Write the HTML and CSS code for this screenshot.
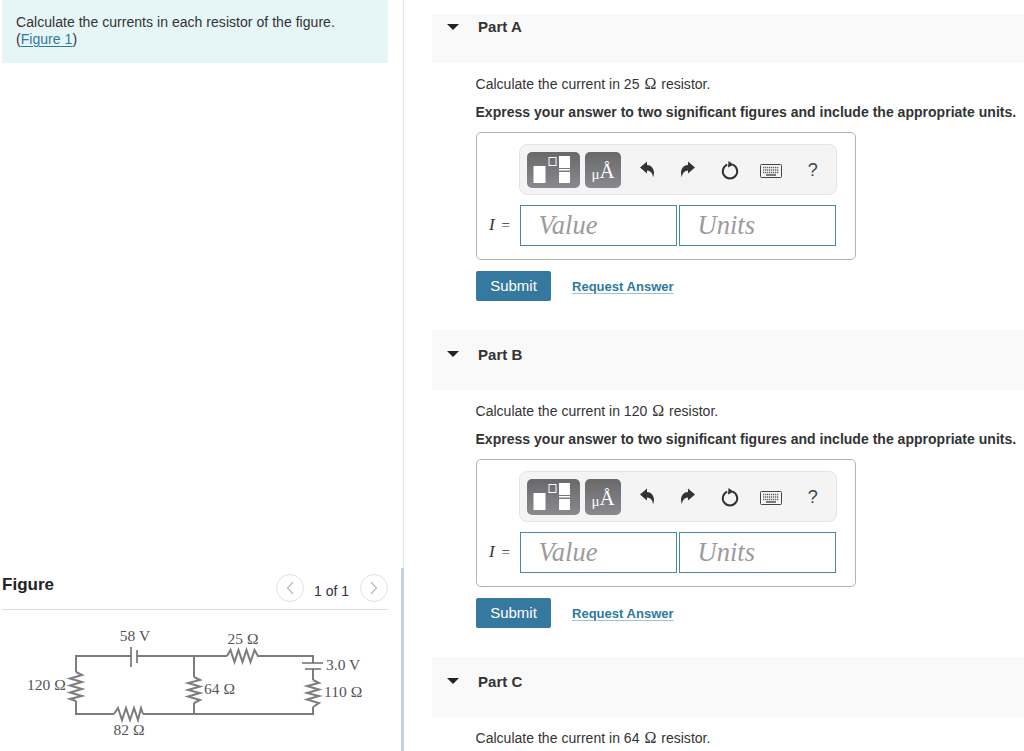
FILE: index.html
```html
<!DOCTYPE html>
<html lang="en">
<head>
<meta charset="utf-8">
<title>Calculate the currents</title>
<link rel="stylesheet" href="styles.css">
</head>
<body>
<svg class="defs" width="0" height="0" aria-hidden="true">
  <symbol id="i-undo" viewBox="0 0 16 17"><path d="M1 6.500 8 .5V4C12 4 15 7.500 15 12 15 13.500 14.500 15 14 16.500 14 12.500 11.500 9.500 8 9.500V12.500z" fill="#333"/></symbol>
  <symbol id="i-redo" viewBox="0 0 16 17"><path d="M15 6.500 8 .5V4C4 4 1 7.500 1 12 1 13.500 1.500 15 2 16.500 2 12.500 4.500 9.500 8 9.500V12.500z" fill="#333"/></symbol>
  <symbol id="i-reset" viewBox="0 0 20 20"><path d="M12.800 4.700a7.200 7.200 0 1 1-5.600 0" fill="none" stroke="#333" stroke-width="2"/><path d="M8.500 1 13.800 4.800 8 7.500z" fill="#333"/></symbol>
  <symbol id="i-keys" viewBox="0 0 22 14"><rect x=".5" y=".5" width="21" height="13" rx="1" fill="#f7f7f7" stroke="#444"/><path d="M3 3.500h16M3 6h16M3 8.500h16" stroke="#666" stroke-width="1.300" stroke-dasharray="1.300 .7"/><path d="M6 11h10" stroke="#444" stroke-width="1.400"/></symbol>
  <symbol id="i-tpl" viewBox="0 0 53 36"><rect x="6.500" y="14" width="12" height="17" fill="#fff"/><rect x="22" y="5.500" width="7" height="8" fill="none" stroke="#fff"/><rect x="32" y="4" width="11" height="12" fill="#fff"/><rect x="32" y="17" width="11" height="1.500" fill="#fff"/><rect x="32" y="20" width="11" height="11" fill="#fff"/></symbol>
</svg>

<div class="page">
  <aside class="left">
    <div class="intro">
      <p>Calculate the currents in each resistor of the figure.</p>
      <p>(<a class="link" href="#">Figure 1</a>)</p>
    </div>
    <div class="figure-head">
      <h2>Figure</h2>
      <div class="pager">
        <button class="circle" type="button"><svg width="8" height="14" viewBox="0 0 8 14"><path d="M7 1 1.500 7 7 13" fill="none" stroke="#bbb" stroke-width="1.300"/></svg></button>
        <span>1 of 1</span>
        <button class="circle" type="button"><svg width="8" height="14" viewBox="0 0 8 14"><path d="M1 1 6.500 7 1 13" fill="none" stroke="#bbb" stroke-width="1.300"/></svg></button>
      </div>
    </div>
    <div class="figure-body">
      <svg class="circuit" width="388" height="141" viewBox="0 610 388 141">
        <g fill="none" stroke="#7d7d7d" stroke-width="2">
          <path d="M131 656H76V672M76 701V714H114M143 714H313V707M313 680V669M313 663V656H262M227 656H137M194 656V677M194 703V714"/>
          <path d="M131 647V667M137 650V663M302 663H323M305 669H321" stroke="#6f6f6f" stroke-width="1.600"/>
          <path d="M76 672 82 675 70 678.500 82 682 70 685.500 82 689 70 692.500 82 696 70 699 76 701"/>
          <path d="M194 677 200 680 188 683 200 686.500 188 690 200 693 188 696.500 200 700 194 703"/>
          <path d="M313 680 319 683 307 686 319 689.500 307 693 319 696 307 699.500 319 703 313 707"/>
          <path d="M114 714 118 708 122 720 126 708 130 720 134 708 138 720 141 708 143 714"/>
          <path d="M227 656 230.500 650 234.500 662 238.500 650 242.500 662 246.500 650 250.500 662 254.500 650 258 656 262 656"/>
        </g>
        <g class="circuit-text">
          <text x="135" y="641" text-anchor="middle">58 V</text>
          <text x="243" y="644" text-anchor="middle">25 Ω</text>
          <text x="326" y="670">3.0 V</text>
          <text x="324" y="697">110 Ω</text>
          <text x="204" y="694">64 Ω</text>
          <text x="27" y="690">120 Ω</text>
          <text x="129" y="735" text-anchor="middle">82 Ω</text>
        </g>
      </svg>
    </div>
  </aside>

  <main class="right">
    <section class="part part-first">
      <header class="part-head"><span class="caret"></span><h3>Part A</h3></header>
      <p class="q">Calculate the current in 25 <span class="ohm">Ω</span> resistor.</p>
      <p class="req">Express your answer to two significant figures and include the appropriate units.</p>
      <div class="answer">
        <div class="toolbar">
          <button class="tool tool-tpl" type="button"><svg width="53" height="36"><use href="#i-tpl"/></svg></button>
          <button class="tool tool-unit" type="button"><span class="mu">μ</span><span class="ang">Å</span></button>
          <span class="ico ico-undo"><svg width="16" height="17"><use href="#i-undo"/></svg></span>
          <span class="ico"><svg width="16" height="17"><use href="#i-redo"/></svg></span>
          <span class="ico ico-reset"><svg width="20" height="20"><use href="#i-reset"/></svg></span>
          <span class="ico ico-keys"><svg width="22" height="14"><use href="#i-keys"/></svg></span>
          <span class="ico help">?</span>
        </div>
        <div class="inputs">
          <span class="var"><i>I</i> =</span>
          <span class="field field-value">Value</span>
          <span class="field field-units">Units</span>
        </div>
      </div>
      <div class="actions"><button class="submit" type="button">Submit</button><a class="request" href="#">Request Answer</a></div>
    </section>

    <section class="part">
      <header class="part-head"><span class="caret"></span><h3>Part B</h3></header>
      <p class="q">Calculate the current in 120 <span class="ohm">Ω</span> resistor.</p>
      <p class="req">Express your answer to two significant figures and include the appropriate units.</p>
      <div class="answer">
        <div class="toolbar">
          <button class="tool tool-tpl" type="button"><svg width="53" height="36"><use href="#i-tpl"/></svg></button>
          <button class="tool tool-unit" type="button"><span class="mu">μ</span><span class="ang">Å</span></button>
          <span class="ico ico-undo"><svg width="16" height="17"><use href="#i-undo"/></svg></span>
          <span class="ico"><svg width="16" height="17"><use href="#i-redo"/></svg></span>
          <span class="ico ico-reset"><svg width="20" height="20"><use href="#i-reset"/></svg></span>
          <span class="ico ico-keys"><svg width="22" height="14"><use href="#i-keys"/></svg></span>
          <span class="ico help">?</span>
        </div>
        <div class="inputs">
          <span class="var"><i>I</i> =</span>
          <span class="field field-value">Value</span>
          <span class="field field-units">Units</span>
        </div>
      </div>
      <div class="actions"><button class="submit" type="button">Submit</button><a class="request" href="#">Request Answer</a></div>
    </section>

    <section class="part">
      <header class="part-head"><span class="caret"></span><h3>Part C</h3></header>
      <p class="q">Calculate the current in 64 <span class="ohm">Ω</span> resistor.</p>
    </section>
  </main>
</div>
</body>
</html>
```
FILE: styles.css
```css
* { box-sizing: border-box; }
html, body { margin: 0; padding: 0; height: 751px; overflow: hidden; background: #fff; }
body { font-family: "Liberation Sans", Arial, sans-serif; font-size: 14px; line-height: 20px; letter-spacing: .02px; color: #333; }
p, h2, h3 { margin: 0; }
.defs { position: absolute; }
.page { display: flex; height: 751px; overflow: hidden; }

.left { position: relative; width: 404px; flex: none; height: 751px; padding-left: 2px; padding-right: 15px; border-right: 1px solid #dfe6ee; display: flex; flex-direction: column; }
.left::after { content: ""; position: absolute; top: 568px; bottom: 0; right: -1px; width: 3px; background: #c3d3e5; }
.intro { height: 63px; background: #e6f5f6; padding: 14px 14px 0; line-height: 17px; letter-spacing: .04px; }
.link { color: #2f7b9c; text-decoration: underline; text-underline-offset: 2px; text-decoration-thickness: 1px; }
.figure-head { margin-top: 512px; height: 35px; display: flex; justify-content: space-between; border-bottom: 1px solid #ddd; }
.figure-head h2 { font-size: 17px; line-height: 20px; font-weight: 700; color: #222; }
.pager { display: flex; align-items: flex-start; gap: 10px; font-size: 14px; line-height: 30px; letter-spacing: 0; margin-top: -1px; }
.pager span { margin-top: 2px; margin-right: 1px; }
.circle { width: 28px; height: 28px; padding: 0; border: 1px solid #e2e2e2; border-radius: 50%; background: #fff; display: flex; align-items: center; justify-content: center; }
.figure-body { height: 141px; margin-left: -2px; }
.circuit { display: block; }
.circuit-text { font-family: "Liberation Serif", "Times New Roman", serif; font-size: 15.500px; fill: #555; }

.right { flex: 1; padding-left: 28px; }
.part { height: 327px; }
.part-head { height: 60px; background: #f9f9f9; padding: 14px 0 0 15px; display: flex; align-items: flex-start; }
.part-first { height: 316px; margin-top: 14px; }
.part-first .part-head { height: 49px; padding-top: 3px; }
.caret { width: 0; height: 0; margin-top: 7px; border-left: 6px solid transparent; border-right: 6px solid transparent; border-top: 6px solid #222; }
.part-head h3 { font-size: 15px; line-height: 21px; font-weight: 700; margin-left: 19px; color: #333; }
.part-first .part-head h3 { margin-top: -1px; }
.q { margin: 11px 0 0 43.500px; }
.ohm { font-family: "Liberation Serif", serif; font-size: 16px; line-height: 1; margin: 0 1px; }
.req { margin: 8px 0 0 43.500px; font-weight: 700; white-space: nowrap; }

.answer { width: 380px; height: 128px; margin: 10px 0 0 44px; border: 1px solid #b5b5b5; border-radius: 5px; padding: 11px 18px 0 42px; }
.toolbar { height: 51px; background: #f4f4f4; border: 1px solid #e4e4e4; border-radius: 8px; padding: 7px 0 0 7px; display: flex; align-items: flex-start; }
.tool { height: 36px; padding: 0; border: 0; border-radius: 5px; background: linear-gradient(#69696c, #8a898d); color: #fff; display: flex; align-items: flex-end; justify-content: center; }
.tool svg { display: block; }
.tool-tpl { width: 53px; }
.tool-unit { width: 36px; margin-left: 5px; font-family: "Liberation Serif", serif; padding-bottom: 5px; }
.mu { font-size: 15px; line-height: 17px; }
.ang { font-size: 21px; line-height: 24px; }
.ico { width: 41.500px; height: 34px; display: flex; align-items: center; justify-content: center; color: #444; }
.ico-undo { margin-left: 5px; }
.ico-reset { padding-top: 2px; }
.ico-keys { padding-top: 4px; }
.help { font-size: 18px; height: 36px; }

.inputs { display: flex; align-items: stretch; margin: 10px 0 0 -32px; height: 41px; }
.var { width: 32px; flex: none; padding-right: 9px; text-align: right; font-family: "Liberation Serif", serif; font-size: 15px; line-height: 40px; white-space: nowrap; word-spacing: 3px; }
.var i { font-size: 17px; }
.field { width: 157px; border: 1px solid #4a87a8; font-family: "Liberation Serif", serif; font-style: italic; font-size: 26.500px; line-height: 39px; color: #9b9b9b; padding-left: 17.500px; background: #fff; }
.field-value { margin-left: 1px; }
.field-units { margin-left: 2px; }

.actions { display: flex; align-items: center; margin: 11px 0 0 44px; gap: 21px; }
.submit { width: 75px; height: 30px; padding: 0; border: 0; border-radius: 2px; background: #36799e; color: #fff; font: 15px/30px "Liberation Sans", Arial, sans-serif; }
.request { font-size: 13px; font-weight: 700; color: #2d7a9e; text-decoration: underline; text-decoration-color: #9cc3d6; text-underline-offset: 2px; padding-top: 1px; }
```
